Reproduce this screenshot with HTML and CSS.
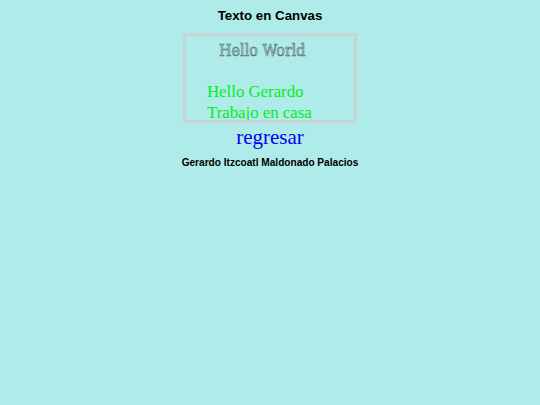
FILE: index.html
```html
<!DOCTYPE html>
<html>
<head>
<meta charset="utf-8">
<link rel="stylesheet" href="styles.css">
</head>
<body>
<div class="page">
  <h1 class="title">Texto en Canvas</h1>
  <div class="canvas">
    <div class="hello">Hello World</div>
    <div class="green g1">Hello Gerardo</div>
    <div class="green g2">Trabajo en casa</div>
  </div>
  <a class="back" href="#">regresar</a>
  <p class="author">Gerardo Itzcoatl Maldonado Palacios</p>
</div>
</body>
</html>
```
FILE: styles.css
```css
html, body {
  margin: 0;
  padding: 0;
  background: #afebe8;
}
.page {
  display: flex;
  flex-direction: column;
  align-items: center;
  font-family: "Liberation Sans", Arial, sans-serif;
}
.title {
  margin: 8px 0 0 0;
  font-size: 13.3px;
  line-height: 16px;
  font-weight: bold;
  color: #000;
}
.canvas {
  margin-top: 9px;
  width: 168px;
  height: 84px;
  border: 3px solid #c9d3d3;
  overflow: hidden;
  font-family: "Liberation Serif", "Times New Roman", serif;
}
.hello {
  margin: 4px 0 0 33px;
  font-family: "DejaVu Serif", serif;
  font-stretch: condensed;
  font-size: 16px;
  line-height: 22px;
  color: #a2cfcd;
  -webkit-text-stroke: 0.5px #4f6868;
  white-space: nowrap;
}
.green {
  margin-left: 21px;
  font-size: 16.8px;
  line-height: 21px;
  color: #00f020;
  white-space: nowrap;
}
.g1 {
  margin-top: 19px;
}
.back {
  font-family: "Liberation Serif", "Times New Roman", serif;
  font-size: 21px;
  line-height: 28px;
  color: #0000ee;
  text-decoration: none;
}
.author {
  margin: 5px 0 0 0;
  font-size: 10.1px;
  line-height: 14px;
  font-weight: bold;
  color: #000;
}
```
